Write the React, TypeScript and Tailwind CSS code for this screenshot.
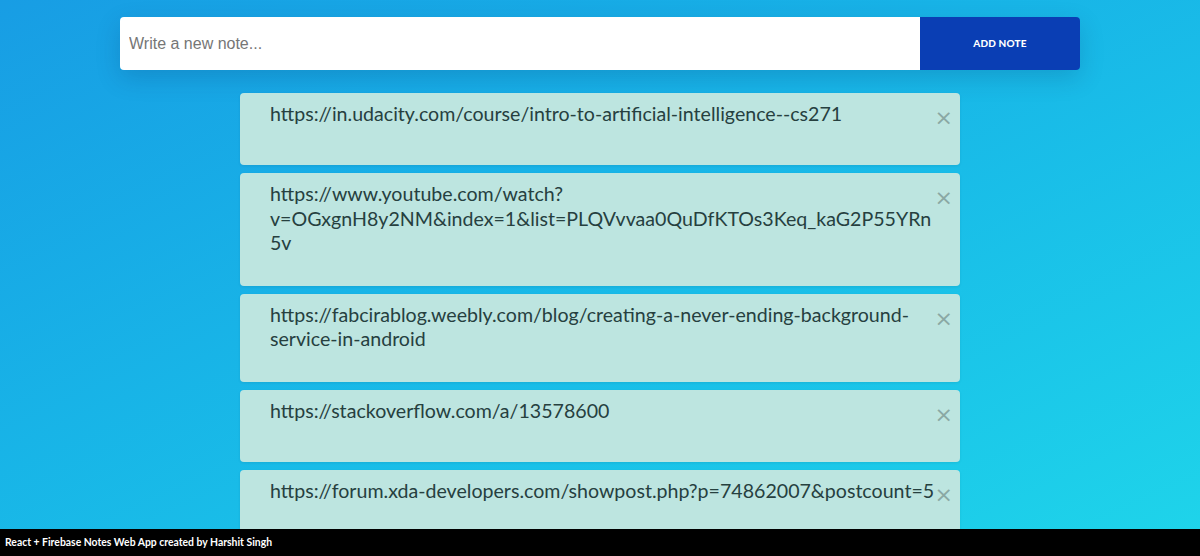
const notes = [
  'https://in.udacity.com/course/intro-to-artificial-intelligence--cs271',
  'https://www.youtube.com/watch?v=OGxgnH8y2NM&index=1&list=PLQVvvaa0QuDfKTOs3Keq_kaG2P55YRn5v',
  'https://fabcirablog.weebly.com/blog/creating-a-never-ending-background-service-in-android',
  'https://stackoverflow.com/a/13578600',
  'https://forum.xda-developers.com/showpost.php?p=74862007&postcount=5',
];

function Note({ text }: { text: string }) {
  return (
    <div className="relative min-h-[72px] w-[720px] rounded-[4px] bg-[#bde5e0] pl-[30px] pr-[22px] pt-[9px] pb-[30px] shadow-[0_1px_3px_rgba(0,0,0,0.08)]">
      <p className="break-words font-['Lato','Noto_Sans',sans-serif] text-[19.6px] leading-[24.5px] text-[#26403f]">
        {text}
      </p>
      <span className="absolute right-[7px] top-[14px] font-['DejaVu_Sans',sans-serif] text-[22px] leading-[22px] text-[#8aa8a4]">
        ×
      </span>
    </div>
  );
}

export default function App() {
  return (
    <div className="flex h-[556px] w-full flex-col overflow-hidden bg-gradient-to-br from-[#189de4] to-[#1fd5ea]">
      <div className="flex flex-1 flex-col items-center overflow-hidden pt-[17px]">
        {/* Input bar */}
        <div className="flex h-[53px] w-[960px] shrink-0 rounded-[4px] shadow-[0_8px_24px_rgba(0,40,90,0.18)]">
          <input
            className="flex-1 rounded-l-[4px] bg-white px-[9px] font-['Liberation_Sans',sans-serif] text-[16px] text-[#333] outline-none placeholder:text-[#767676]"
            placeholder="Write a new note..."
          />
          <button className="w-[160px] rounded-r-[4px] bg-[#0a3eb4] font-['Lato',sans-serif] text-[10px] font-black tracking-[0.2px] text-white">
            ADD NOTE
          </button>
        </div>

        {/* Notes */}
        <div className="mt-[23px] flex flex-col gap-[8px]">
          {notes.map((n) => (
            <Note key={n} text={n} />
          ))}
        </div>
      </div>

      <footer className="h-[27px] shrink-0 bg-black px-[5px] pt-[5px] font-['Lato',sans-serif] text-[10.4px] font-bold leading-[16px] text-white">
        React + Firebase Notes Web App created by Harshit Singh
      </footer>
    </div>
  );
}
